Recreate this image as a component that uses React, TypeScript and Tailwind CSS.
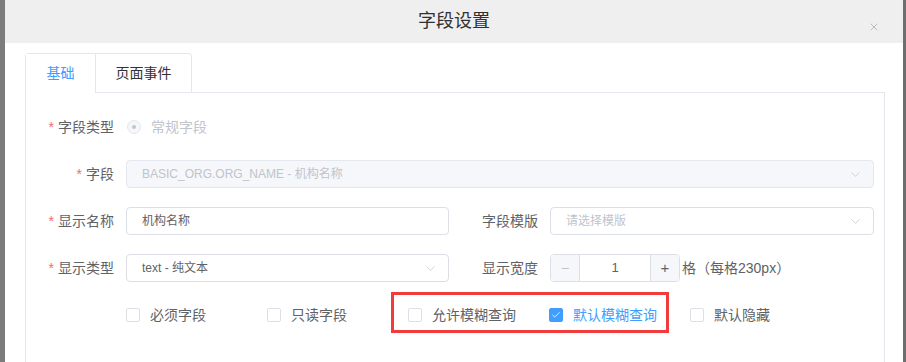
import React from 'react';
import { ChevronDown, X, Check } from 'lucide-react';

const Label = ({ text, required }: { text: string; required?: boolean }) => (
    <div className="w-[100px] shrink-0 pr-[12px] text-right text-[14px] text-[#606266] leading-[28px]">
        {required && <span className="text-[#f56c6c] mr-[4px]">*</span>}
        {text}
    </div>
);

const Select = ({ value, placeholder, disabled, className = '' }: { value?: string; placeholder?: string; disabled?: boolean; className?: string }) => (
    <div
        className={`h-[28px] flex items-center justify-between pl-[15px] pr-[10px] rounded-[4px] border text-[12px] ${disabled ? 'bg-[#f5f7fa] border-[#e4e7ed] text-[#c0c4cc]' : 'bg-white border-[#dcdfe6] text-[#606266]'} ${className}`}
    >
        <span className={value ? '' : 'text-[#c0c4cc]'}>{value || placeholder}</span>
        <ChevronDown size={15} strokeWidth={1.2} className="text-[#c0c4cc]" />
    </div>
);

const CheckItem = ({ text, checked }: { text: string; checked?: boolean }) => (
    <div className="w-[141px] flex items-center gap-[10px] h-[28px]">
        <div className={`w-[14px] h-[14px] rounded-[2px] border flex items-center justify-center ${checked ? 'bg-[#409eff] border-[#409eff]' : 'bg-white border-[#dcdfe6]'}`}>
            {checked && <Check size={10} strokeWidth={2} className="text-white" />}
        </div>
        <span className={`text-[14px] ${checked ? 'text-[#409eff]' : 'text-[#606266]'}`}>{text}</span>
    </div>
);

export default function App() {
    return (
        <div className="relative w-[906px] h-[362px] overflow-hidden bg-[#6e6e6e] flex font-['Liberation_Sans','Noto_Sans_CJK_SC',sans-serif]">
            {/* backdrop strip */}
            <div className="w-[5px] shrink-0 bg-[#7c7c7c]" />

            {/* Dialog */}
            <div className="w-[898px] shrink-0 bg-white flex flex-col">
                {/* Header */}
                <div className="h-[43px] bg-[#efefef] relative flex items-center justify-center">
                    <span className="text-[18px] text-[#303133]">字段设置</span>
                    <X size={12} strokeWidth={1.5} className="absolute right-[23px] top-[21px] text-[#a3aab8]" />
                </div>

                {/* Body */}
                <div className="pt-[10px] pl-[20px] flex-1 flex flex-col">
                    <div className="w-[860px] flex-1 flex flex-col">
                        {/* Tabs */}
                        <div className="flex border-b border-[#e4e7ed] h-[40px]">
                            <div className="flex border border-b-0 border-[#e4e7ed] rounded-t-[4px]">
                                <div className="relative -mb-px w-[69px] h-[40px] bg-white border-b border-white flex items-center justify-center text-[14px] text-[#409eff]">
                                    基础
                                </div>
                                <div className="w-[96px] border-l border-[#e4e7ed] flex items-center justify-center text-[14px] text-[#303133]">
                                    页面事件
                                </div>
                            </div>
                        </div>

                        {/* Panel */}
                        <div className="flex-1 border-l border-r border-[#e4e7ed] pt-[20px] flex flex-col gap-[19px]">
                            <div className="flex items-center h-[28px]">
                                <Label text="字段类型" required />
                                <div className="flex items-center gap-[10px] pl-[1px]">
                                    <div className="w-[14px] h-[14px] rounded-full border border-[#e4e7ed] bg-[#f5f7fa] flex items-center justify-center">
                                        <div className="w-[4px] h-[4px] rounded-full bg-[#c0c4cc]" />
                                    </div>
                                    <span className="text-[14px] text-[#c0c4cc]">常规字段</span>
                                </div>
                            </div>

                            <div className="flex items-center h-[28px] pr-[10px]">
                                <Label text="字段" required />
                                <Select value="BASIC_ORG.ORG_NAME - 机构名称" disabled className="flex-1" />
                            </div>

                            <div className="flex h-[28px] pr-[10px]">
                                <div className="w-[424px] flex">
                                    <Label text="显示名称" required />
                                    <div className="w-[323px] h-[28px] flex items-center pl-[15px] rounded-[4px] border border-[#dcdfe6] text-[12px] text-[#606266]">
                                        机构名称
                                    </div>
                                </div>
                                <div className="flex-1 flex">
                                    <Label text="字段模版" />
                                    <Select placeholder="请选择模版" className="flex-1" />
                                </div>
                            </div>

                            <div className="flex h-[28px] pr-[10px]">
                                <div className="w-[424px] flex">
                                    <Label text="显示类型" required />
                                    <Select value="text - 纯文本" className="w-[323px]" />
                                </div>
                                <div className="flex-1 flex items-center">
                                    <Label text="显示宽度" />
                                    <div className="w-[130px] h-[28px] flex rounded-[4px] border border-[#dcdfe6] overflow-hidden">
                                        <div className="w-[29px] bg-[#f5f7fa] border-r border-[#dcdfe6] flex items-center justify-center text-[#c0c4cc] text-[14px]">−</div>
                                        <div className="flex-1 flex items-center justify-center text-[13px] text-[#606266]">1</div>
                                        <div className="w-[29px] bg-[#f5f7fa] border-l border-[#dcdfe6] flex items-center justify-center text-[#606266] text-[15px]">+</div>
                                    </div>
                                    <span className="ml-[2px] text-[14px] text-[#606266]">格（每格230px）</span>
                                </div>
                            </div>

                            <div className="flex pl-[100px]">
                                <CheckItem text="必须字段" />
                                <CheckItem text="只读字段" />
                                <CheckItem text="允许模糊查询" />
                                <CheckItem text="默认模糊查询" checked />
                                <CheckItem text="默认隐藏" />
                            </div>
                        </div>
                    </div>
                </div>
            </div>

            {/* highlight annotation */}
            <div className="absolute left-[391px] top-[292px] w-[278px] h-[41px] border-[3px] border-[#f23b3b]" />
        </div>
    );
}
